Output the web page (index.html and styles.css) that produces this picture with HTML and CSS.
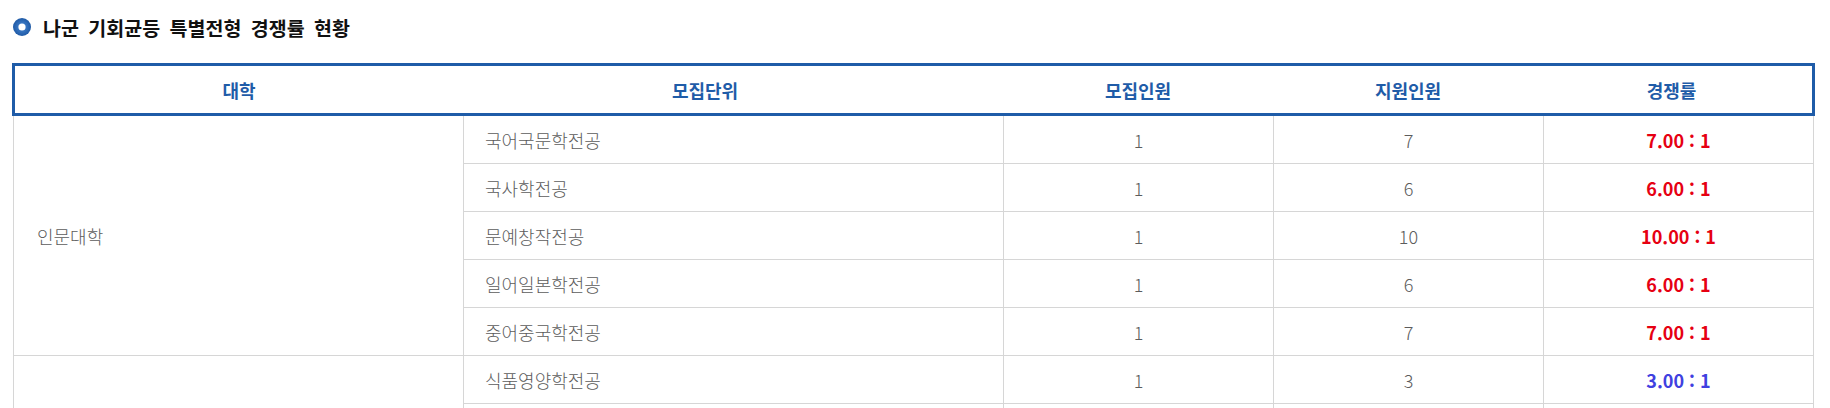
FILE: index.html
```html
<!DOCTYPE html>
<html lang="ko">
<head>
<meta charset="utf-8">
<title>나군 기회균등 특별전형 경쟁률 현황</title>
<link rel="stylesheet" href="styles.css">
</head>
<body>
<div class="page">
  <h2 class="title">
    <svg class="bullet" width="20" height="20" viewBox="0 0 20 20" aria-hidden="true">
      <defs>
        <radialGradient id="rg" cx="50%" cy="50%" r="50%">
          <stop offset="0%" stop-color="#4a8ad6"/>
          <stop offset="100%" stop-color="#1f5aa6"/>
        </radialGradient>
      </defs>
      <circle cx="10" cy="10" r="9" fill="url(#rg)"/>
      <circle cx="10" cy="10" r="3.6" fill="#ffffff"/>
    </svg>
    <span>나군 기회균등 특별전형 경쟁률 현황</span>
  </h2>

  <div class="head">
    <div class="hc">대학</div>
    <div class="hc c2">모집단위</div>
    <div class="hc">모집인원</div>
    <div class="hc">지원인원</div>
    <div class="hc c5">경쟁률</div>
  </div>

  <div class="clip">
  <table class="grid">
    <colgroup>
      <col class="w1"><col class="w2"><col class="w3"><col class="w3"><col class="w3">
    </colgroup>
    <tbody>
      <tr>
        <td class="college" rowspan="5">인문대학</td>
        <td class="unit">국어국문학전공</td>
        <td class="num">1</td>
        <td class="num">7</td>
        <td class="ratio high">7.00 : 1</td>
      </tr>
      <tr>
        <td class="unit">국사학전공</td>
        <td class="num">1</td>
        <td class="num">6</td>
        <td class="ratio high">6.00 : 1</td>
      </tr>
      <tr>
        <td class="unit">문예창작전공</td>
        <td class="num">1</td>
        <td class="num">10</td>
        <td class="ratio high">10.00 : 1</td>
      </tr>
      <tr>
        <td class="unit">일어일본학전공</td>
        <td class="num">1</td>
        <td class="num">6</td>
        <td class="ratio high">6.00 : 1</td>
      </tr>
      <tr>
        <td class="unit">중어중국학전공</td>
        <td class="num">1</td>
        <td class="num">7</td>
        <td class="ratio high">7.00 : 1</td>
      </tr>
      <tr>
        <td class="college" rowspan="2"></td>
        <td class="unit">식품영양학전공</td>
        <td class="num">1</td>
        <td class="num">3</td>
        <td class="ratio low">3.00 : 1</td>
      </tr>
      <tr class="peek">
        <td class="unit"></td>
        <td class="num"></td>
        <td class="num"></td>
        <td class="ratio"></td>
      </tr>
    </tbody>
  </table>
  </div>
</div>
</body>
</html>
```

FILE: styles.css
```css
html, body {
  margin: 0;
  padding: 0;
  background: #ffffff;
}

body {
  font-family: "Noto Sans CJK KR", "Noto Sans", sans-serif;
  color: #555555;
  overflow: hidden;
}

.page {
  padding-left: 12px;
}

.title {
  display: flex;
  align-items: center;
  gap: 11px;
  height: 54px;
  margin: 0 0 9px 0;
  font-size: 19.5px;
  font-weight: 700;
  color: #111111;
  word-spacing: 4px;
}

.bullet {
  flex: none;
  margin-top: -1px;
}

.head {
  display: grid;
  grid-template-columns: 448px 540px 270px 270px 269px;
  width: 1797px;
  height: 47px;
  border: 3px solid #1f5ca8;
  background: #ffffff;
}

.hc {
  display: flex;
  align-items: center;
  justify-content: center;
  font-size: 18px;
  font-weight: 700;
  color: #1f5ca8;
}

.hc.c2 {
  padding-right: 56px;
}

.hc.c5 {
  padding-right: 12px;
}

.clip {
  height: 292px;
  overflow: hidden;
}

.grid {
  margin-left: 1px;
  width: 1801px;
  border-collapse: collapse;
  table-layout: fixed;
}

.w1 { width: 450px; }
.w2 { width: 540px; }
.w3 { width: 270px; }

.grid td {
  height: 47px;
  padding: 0;
  border: 1px solid #d6d6d6;
  border-top: none;
  font-size: 18px;
  font-weight: 300;
  color: #5c5c5c;
  vertical-align: middle;
}

.college {
  padding-left: 23px !important;
  text-align: left;
}

.unit {
  padding-left: 21px !important;
  text-align: left;
}

.num {
  text-align: center;
}

.ratio {
  text-align: center;
  font-weight: 700 !important;
}

.ratio.high {
  color: #e60012 !important;
}

.ratio.low {
  color: #4040e0 !important;
}
```
